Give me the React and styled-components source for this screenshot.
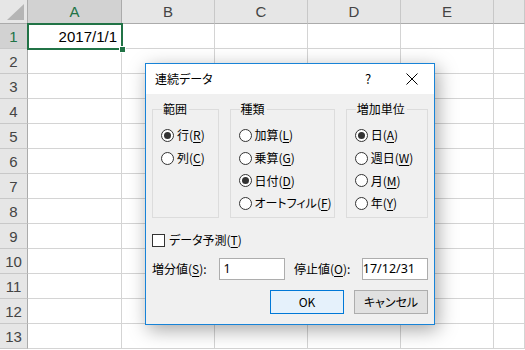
import React from 'react';
import styled, { createGlobalStyle } from 'styled-components';

const GlobalStyle = createGlobalStyle`
  body {
    margin: 0;
    overflow: hidden;
    background: #fff;
  }
`;

const COLS = ['A', 'B', 'C', 'D', 'E', ''];
const ROWS = 13;

const Page = styled.div`
  position: relative;
  width: 525px;
  height: 350px;
  overflow: hidden;
  font-family: 'Liberation Sans', Arial, sans-serif;
`;

const Sheet = styled.div`
  display: grid;
  grid-template-columns: 28px 94px 93px 93px 93px 93px 1fr;
  grid-template-rows: 24px repeat(13, 25px);
`;

const Corner = styled.div`
  background: #e6e6e6;
  border-right: 1px solid #ababab;
  border-bottom: 1px solid #ababab;
  display: flex;
  align-items: flex-end;
  justify-content: flex-end;
  padding: 0 3px 3px 0;
`;

const ColHead = styled.div`
  background: ${(p) => (p.$active ? '#d2d2d2' : '#e6e6e6')};
  color: ${(p) => (p.$active ? '#217346' : '#444')};
  border-right: 1px solid ${(p) => (p.$active ? '#ababab' : '#c8c8c8')};
  border-bottom: 1px solid #ababab;
  font-size: 15px;
  display: flex;
  align-items: center;
  justify-content: center;
`;

const RowHead = styled.div`
  background: ${(p) => (p.$active ? '#d2d2d2' : '#e6e6e6')};
  color: ${(p) => (p.$active ? '#217346' : '#444')};
  border-right: 1px solid #ababab;
  border-bottom: 1px solid #c8c8c8;
  font-size: 15px;
  display: flex;
  align-items: center;
  justify-content: center;
`;

const Cell = styled.div`
  border-right: 1px solid #d4d4d4;
  border-bottom: 1px solid #d4d4d4;
  font-size: 15px;
  color: #000;
  display: flex;
  align-items: center;
  justify-content: flex-end;
  padding-right: 4px;
  position: relative;
  ${(p) =>
    p.$selected &&
    `
    outline: 2px solid #217346;
    outline-offset: -1px;
    z-index: 1;
    &::after {
      content: '';
      position: absolute;
      right: -5px;
      bottom: -5px;
      width: 5px;
      height: 5px;
      background: #217346;
      border: 1px solid #fff;
    }
  `}
`;

/* ---------- dialog ---------- */

const Dialog = styled.div`
  position: absolute;
  left: 145px;
  top: 63px;
  width: 288px;
  height: 260px;
  border: 1px solid #1883d7;
  background: #f0f0f0;
  box-shadow: 3px 5px 18px rgba(0, 0, 0, 0.35);
  font-family: 'Noto Sans CJK JP', 'Noto Sans', sans-serif;
  font-feature-settings: 'palt';
  font-size: 12px;
  line-height: 16px;
  color: #000;
  display: flex;
  flex-direction: column;
`;

const TitleBar = styled.div`
  height: 30px;
  background: #fff;
  display: flex;
  align-items: center;
  padding-left: 9px;
`;

const Title = styled.div`
  flex: 1;
`;

const TitleButton = styled.div`
  width: 44px;
  height: 30px;
  display: flex;
  align-items: center;
  justify-content: center;
  font-size: 13px;
`;

const Body = styled.div`
  flex: 1;
  padding: 8px 6px 0 6px;
  display: flex;
  flex-direction: column;
`;

const Groups = styled.div`
  display: flex;
  gap: 11px;
`;

const Group = styled.fieldset`
  width: ${(p) => p.$w}px;
  height: 116px;
  box-sizing: border-box;
  margin: 0;
  border: 1px solid #dcdcdc;
  padding: 8px 0 0 8px;
  display: flex;
  flex-direction: column;
`;

const Legend = styled.legend`
  padding: 0 2px 0 1px;
  margin-left: 1px;
  line-height: 14px;
`;

const Option = styled.label`
  height: 22.7px;
  display: flex;
  align-items: center;
  gap: 3px;
  white-space: nowrap;
`;

const Radio = styled.span`
  width: 13px;
  height: 13px;
  box-sizing: border-box;
  border-radius: 50%;
  border: 1px solid #333;
  background: #fff;
  display: flex;
  align-items: center;
  justify-content: center;
  flex-shrink: 0;
  &::after {
    content: '';
    width: 7px;
    height: 7px;
    border-radius: 50%;
    background: ${(p) => (p.$checked ? '#333' : 'transparent')};
  }
`;

const Check = styled.span`
  width: 13px;
  height: 13px;
  box-sizing: border-box;
  border: 1px solid #333;
  background: #fff;
  flex-shrink: 0;
`;

const Key = styled.span`
  text-decoration: underline;
  text-underline-offset: 2px;
`;

const CheckRow = styled.label`
  margin-top: 14px;
  height: 16px;
  display: flex;
  align-items: center;
  gap: 4px;
`;

const FieldRow = styled.div`
  margin-top: 10px;
  display: flex;
  align-items: center;
`;

const FieldLabel = styled.span`
  width: ${(p) => p.$w}px;
  padding-left: ${(p) => p.$pad || 0}px;
  box-sizing: border-box;
  white-space: nowrap;
`;

const Field = styled.div`
  width: 66px;
  height: 22px;
  box-sizing: border-box;
  border: 1px solid #adadad;
  background: #fff;
  font-family: 'Noto Sans', sans-serif;
  font-size: 12.5px;
  display: flex;
  align-items: center;
  justify-content: ${(p) => (p.$end ? 'flex-end' : 'flex-start')};
  padding: ${(p) => (p.$end ? '0 12px 0 0' : '0 0 0 3px')};
  overflow: hidden;
  white-space: nowrap;
`;

const Buttons = styled.div`
  margin-top: 10px;
  display: flex;
  justify-content: flex-end;
  gap: 10px;
`;

const Button = styled.div`
  width: 74px;
  height: 24px;
  box-sizing: border-box;
  border: 1px solid ${(p) => (p.$primary ? '#0078d7' : '#adadad')};
  background: ${(p) => (p.$primary ? '#e5f1fb' : '#e1e1e1')};
  display: flex;
  align-items: center;
  justify-content: center;
`;

const Opt = ({ checked, text, k }) => (
  <Option>
    <Radio $checked={checked} />
    <span>
      {text}(<Key>{k}</Key>)
    </span>
  </Option>
);

export default function App() {
  const cells = [];
  cells.push(
    <Corner key="corner">
      <svg width="17" height="16" viewBox="0 0 17 16">
        <polygon points="17,0 17,16 0,16" fill="#b5b5b5" />
      </svg>
    </Corner>
  );
  COLS.forEach((c, i) =>
    cells.push(
      <ColHead key={'h' + i} $active={c === 'A'}>
        {c}
      </ColHead>
    )
  );
  for (let r = 1; r <= ROWS; r++) {
    cells.push(
      <RowHead key={'r' + r} $active={r === 1}>
        {r}
      </RowHead>
    );
    COLS.forEach((c, i) =>
      cells.push(
        <Cell key={r + '-' + i} $selected={r === 1 && i === 0}>
          {r === 1 && i === 0 ? '2017/1/1' : ''}
        </Cell>
      )
    );
  }

  return (
    <Page>
      <GlobalStyle />
      <Sheet>{cells}</Sheet>
      <Dialog>
        <TitleBar>
          <Title>連続データ</Title>
          <TitleButton>?</TitleButton>
          <TitleButton>
            <svg width="12" height="12" viewBox="0 0 12 12">
              <path d="M0.5 0.5 L11.5 11.5 M11.5 0.5 L0.5 11.5" stroke="#000" strokeWidth="1" />
            </svg>
          </TitleButton>
        </TitleBar>
        <Body>
          <Groups>
            <Group $w={67}>
              <Legend>範囲</Legend>
              <Opt checked text="行" k="R" />
              <Opt text="列" k="C" />
            </Group>
            <Group $w={106}>
              <Legend>種類</Legend>
              <Opt text="加算" k="L" />
              <Opt text="乗算" k="G" />
              <Opt checked text="日付" k="D" />
              <Opt text="オートフィル" k="F" />
            </Group>
            <Group $w={83}>
              <Legend>増加単位</Legend>
              <Opt checked text="日" k="A" />
              <Opt text="週日" k="W" />
              <Opt text="月" k="M" />
              <Opt text="年" k="Y" />
            </Group>
          </Groups>
          <CheckRow>
            <Check />
            <span>
              データ予測(<Key>T</Key>)
            </span>
          </CheckRow>
          <FieldRow>
            <FieldLabel $w={68}>
              増分値(<Key>S</Key>):
            </FieldLabel>
            <Field>1</Field>
            <FieldLabel $w={78} $pad={9}>
              停止値(<Key>O</Key>):
            </FieldLabel>
            <Field $end>2017/12/31</Field>
          </FieldRow>
          <Buttons>
            <Button $primary>OK</Button>
            <Button>キャンセル</Button>
          </Buttons>
        </Body>
      </Dialog>
    </Page>
  );
}
